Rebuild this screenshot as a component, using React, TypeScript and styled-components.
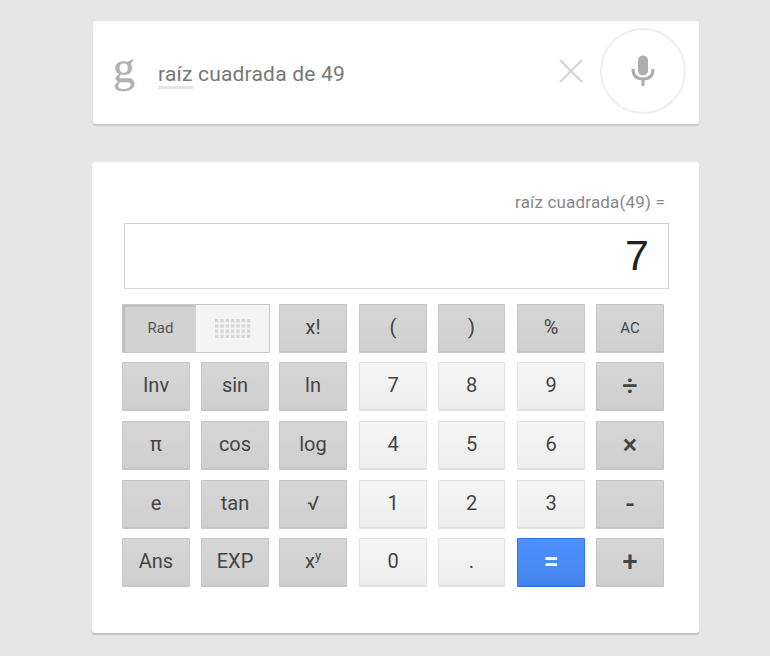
import React from "react";
import styled, { createGlobalStyle } from "styled-components";

const GlobalStyle = createGlobalStyle`
  html, body {
    margin: 0;
    padding: 0;
    background: #e5e5e5;
    font-family: Roboto, "Liberation Sans", sans-serif;
  }
`;

const Page = styled.div`
  width: 770px;
  height: 656px;
  overflow: hidden;
  padding: 21px 71px 0 92px;
  box-sizing: border-box;
  display: flex;
  flex-direction: column;
  gap: 38px;
`;

const SearchCard = styled.div`
  margin-left: 1px;
  height: 103px;
  box-sizing: border-box;
  background: #fff;
  border-radius: 3px;
  box-shadow: 0 2px 1px rgba(0, 0, 0, 0.12);
  display: flex;
  align-items: center;
  padding: 0 13px 0 20px;
`;

const GoogleG = styled.span`
  width: 45px;
  font-family: "Liberation Serif", serif;
  font-size: 44px;
  line-height: 44px;
  color: #b2b2b2;
  -webkit-text-stroke: 0.4px #b2b2b2;
  margin-top: -10px;
`;

const Query = styled.div`
  flex: 1;
  font-size: 21px;
  letter-spacing: 0.2px;
  color: #777;
  margin-top: 5px;
`;

const Corrected = styled.span`
  display: inline-block;
  line-height: 24px;
  border-bottom: 3px solid #e4e4e4;
`;

const ClearIcon = styled.svg`
  width: 26px;
  height: 26px;
  margin: -4px 16px 0 0;
`;

const MicCircle = styled.div`
  width: 86px;
  height: 86px;
  box-sizing: border-box;
  margin-top: -4px;
  border: 2px solid #eee;
  border-radius: 50%;
  display: flex;
  align-items: center;
  justify-content: center;
`;

const CalcCard = styled.div`
  height: 471px;
  box-sizing: border-box;
  background: #fff;
  border-radius: 3px;
  box-shadow: 0 2px 1px rgba(0, 0, 0, 0.14);
  padding: 29px 30px 0 30px;
`;

const Formula = styled.div`
  font-size: 17px;
  line-height: 22px;
  color: #888;
  text-align: right;
  padding-right: 4px;
  letter-spacing: 0.18px;
`;

const Display = styled.div`
  margin: 10px 0 15px 2px;
  height: 66px;
  box-sizing: border-box;
  border: 1px solid #d0d0d0;
  border-bottom-color: #dcdcdc;
  padding-right: 19px;
  text-align: right;
  font-family: "Liberation Sans", Arial, sans-serif;
  font-size: 43px;
  line-height: 62px;
  color: #222;
`;

const Keypad = styled.div`
  display: grid;
  grid-template-columns: repeat(7, 68px);
  grid-template-rows: 49px 50px 50px 49px 49px;
  column-gap: 11px;
  row-gap: 9px;
`;

type Tone = "dark" | "light" | "blue";

const toneStyles: Record<Tone, string> = {
  dark: `
    background: linear-gradient(#d6d6d6, #cfcfcf);
    border-color: #c6c6c6;
    color: #444;
  `,
  light: `
    background: linear-gradient(#f5f5f5, #eeeeee);
    border-color: #e2e2e2;
    color: #444;
  `,
  blue: `
    background: linear-gradient(#4d90fe, #4585ec);
    border-color: #2f78f0;
    color: #fff;
  `,
};

const Key = styled.div<{ $tone: Tone; $small?: boolean; $op?: boolean }>`
  box-sizing: border-box;
  border: 1px solid;
  border-bottom-width: 2px;
  border-radius: 1px;
  display: flex;
  align-items: center;
  justify-content: center;
  max-height: 49px;
  font-size: ${(p) => (p.$small ? "15px" : p.$op ? "27px" : "20px")};
  font-weight: ${(p) => (p.$op ? 500 : 400)};
  line-height: 1;
  padding-bottom: ${(p) => (p.$op ? "0" : p.$small ? "0" : "2px")};
  ${(p) => toneStyles[p.$tone]}

  /* third column sits a pixel left in the picture, fifth is a pixel narrower */
  &:nth-child(7n + 2) {
    margin-left: -1px;
    margin-right: 1px;
  }
  &:nth-child(7n + 4) {
    margin-right: 1px;
  }
`;

const Toggle = styled.div`
  grid-column: span 2;
  display: flex;
  box-sizing: border-box;
  width: 148px;
  border: 1px solid #c8c8c8;
  background: #f4f4f4;
`;

const ToggleActive = styled.div`
  width: 73px;
  box-sizing: border-box;
  background: #d2d2d2;
  border-left: 2px solid #bdbdbd;
  border-top: 2px solid #c2c2c2;
  font-size: 15px;
  color: #555;
  display: flex;
  align-items: center;
  justify-content: center;
  padding-bottom: 3px;
`;

const ToggleRest = styled.div`
  flex: 1;
  display: flex;
  align-items: center;
  justify-content: center;
  padding-bottom: 1px;
`;

const Sup = styled.sup`
  font-size: 13px;
  line-height: 0;
`;

const DotGrid = () => (
  <svg width="36" height="19" viewBox="0 0 36 19">
    {[0, 1, 2, 3].flatMap((row) =>
      [0, 1, 2, 3, 4, 5, 6].map((col) => (
        <rect key={`${row}-${col}`} x={col * 5.3} y={row * 5.2} width="3.4" height="3.4" fill="#d6d6d6" />
      ))
    )}
  </svg>
);

type KeyDef = { label: React.ReactNode; tone: Tone; small?: boolean; op?: boolean };

const firstRow: KeyDef[] = [
  { label: "x!", tone: "dark" },
  { label: "(", tone: "dark" },
  { label: ")", tone: "dark" },
  { label: "%", tone: "dark" },
  { label: "AC", tone: "dark", small: true },
];

const otherRows: KeyDef[] = [
  { label: "Inv", tone: "dark" },
  { label: "sin", tone: "dark" },
  { label: "ln", tone: "dark" },
  { label: "7", tone: "light" },
  { label: "8", tone: "light" },
  { label: "9", tone: "light" },
  { label: "÷", tone: "dark", op: true },
  { label: "π", tone: "dark" },
  { label: "cos", tone: "dark" },
  { label: "log", tone: "dark" },
  { label: "4", tone: "light" },
  { label: "5", tone: "light" },
  { label: "6", tone: "light" },
  { label: "×", tone: "dark", op: true },
  { label: "e", tone: "dark" },
  { label: "tan", tone: "dark" },
  { label: "√", tone: "dark" },
  { label: "1", tone: "light" },
  { label: "2", tone: "light" },
  { label: "3", tone: "light" },
  { label: "-", tone: "dark", op: true },
  { label: "Ans", tone: "dark" },
  { label: "EXP", tone: "dark" },
  {
    label: (
      <span>
        x<Sup>y</Sup>
      </span>
    ),
    tone: "dark",
  },
  { label: "0", tone: "light" },
  { label: ".", tone: "light" },
  { label: "=", tone: "blue", op: true },
  { label: "+", tone: "dark", op: true },
];

export default function App() {
  return (
    <Page>
      <GlobalStyle />
      <SearchCard>
        <GoogleG>g</GoogleG>
        <Query>
          <Corrected>raíz</Corrected> cuadrada de 49
        </Query>
        <ClearIcon viewBox="0 0 26 26">
          <path d="M2 2 L24 24 M24 2 L2 24" stroke="#d6d6d6" strokeWidth="2.4" fill="none" />
        </ClearIcon>
        <MicCircle>
          <svg width="24" height="32" viewBox="0 0 24 32">
            <rect x="7" y="0.5" width="10" height="20" rx="5" fill="#adadad" />
            <path d="M2 14 C2 21 6 24 12 24 C18 24 22 21 22 14" stroke="#adadad" strokeWidth="3" fill="none" />
            <rect x="10.5" y="23" width="3" height="8" fill="#adadad" />
          </svg>
        </MicCircle>
      </SearchCard>
      <CalcCard>
        <Formula>raíz cuadrada(49) =</Formula>
        <Display>7</Display>
        <Keypad>
          <Toggle>
            <ToggleActive>Rad</ToggleActive>
            <ToggleRest>
              <DotGrid />
            </ToggleRest>
          </Toggle>
          {[...firstRow, ...otherRows].map((k, i) => (
            <Key key={i} $tone={k.tone} $small={k.small} $op={k.op}>
              {k.label}
            </Key>
          ))}
        </Keypad>
      </CalcCard>
    </Page>
  );
}
